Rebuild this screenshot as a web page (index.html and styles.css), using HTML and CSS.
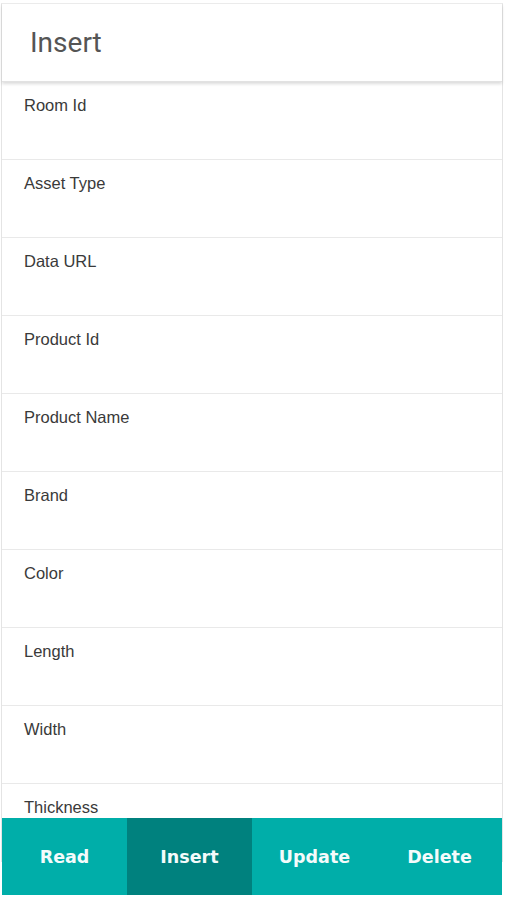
FILE: index.html
```html
<!DOCTYPE html>
<html>
<head>
<meta charset="utf-8">
<link rel="stylesheet" href="styles.css">
</head>
<body>
<div class="card">
  <div class="header"><span class="title">Insert</span></div>
  <div class="fields">
    <div class="row"><span class="label">Room Id</span></div>
    <div class="row"><span class="label">Asset Type</span></div>
    <div class="row"><span class="label">Data URL</span></div>
    <div class="row"><span class="label">Product Id</span></div>
    <div class="row"><span class="label">Product Name</span></div>
    <div class="row"><span class="label">Brand</span></div>
    <div class="row"><span class="label">Color</span></div>
    <div class="row"><span class="label">Length</span></div>
    <div class="row"><span class="label">Width</span></div>
    <div class="row"><span class="label">Thickness</span></div>
  </div>
</div>
<nav class="tabs">
  <div class="tab">Read</div>
  <div class="tab active">Insert</div>
  <div class="tab">Update</div>
  <div class="tab">Delete</div>
</nav>
</body>
</html>
```
FILE: styles.css
```css
html, body {
  margin: 0;
  padding: 0;
  background: #ffffff;
  height: 900px;
  overflow: hidden;
}
body {
  padding-top: 3px;
  font-family: "Liberation Sans", Arial, sans-serif;
}
.card {
  margin-left: 1px;
  width: 500px;
  border-left: 1px solid #e4e4e4;
  border-right: 1px solid #e4e4e4;
  border-top: 1px solid #ececec;
  background: #fff;
}
.header {
  height: 78px;
  display: flex;
  align-items: center;
  padding-left: 28px;
  box-sizing: border-box;
  box-shadow: 0 2px 3px rgba(0, 0, 0, 0.14);
  border-bottom: 1px solid #e2e2e2;
  position: relative;
}
.title {
  font-size: 28px;
  color: #555;
  font-family: Roboto, "Liberation Sans", sans-serif;
}
.row {
  border-bottom: 1px solid #e9e9e9;
  padding: 13px 0 0 22px;
  height: 64px;
}
.label {
  display: block;
  font-size: 16.5px;
  line-height: 20px;
  color: #3a3a3a;
}
.tabs {
  position: fixed;
  left: 2px;
  bottom: 5px;
  width: 500px;
  height: 77px;
  display: grid;
  grid-template-columns: repeat(4, 1fr);
  background: #00aea9;
}
.tab {
  display: flex;
  align-items: center;
  justify-content: center;
  font-family: "DejaVu Sans", sans-serif;
  font-weight: bold;
  font-size: 17.5px;
  color: #f4fbfb;
}
.tab.active {
  background: #00817e;
}
```
